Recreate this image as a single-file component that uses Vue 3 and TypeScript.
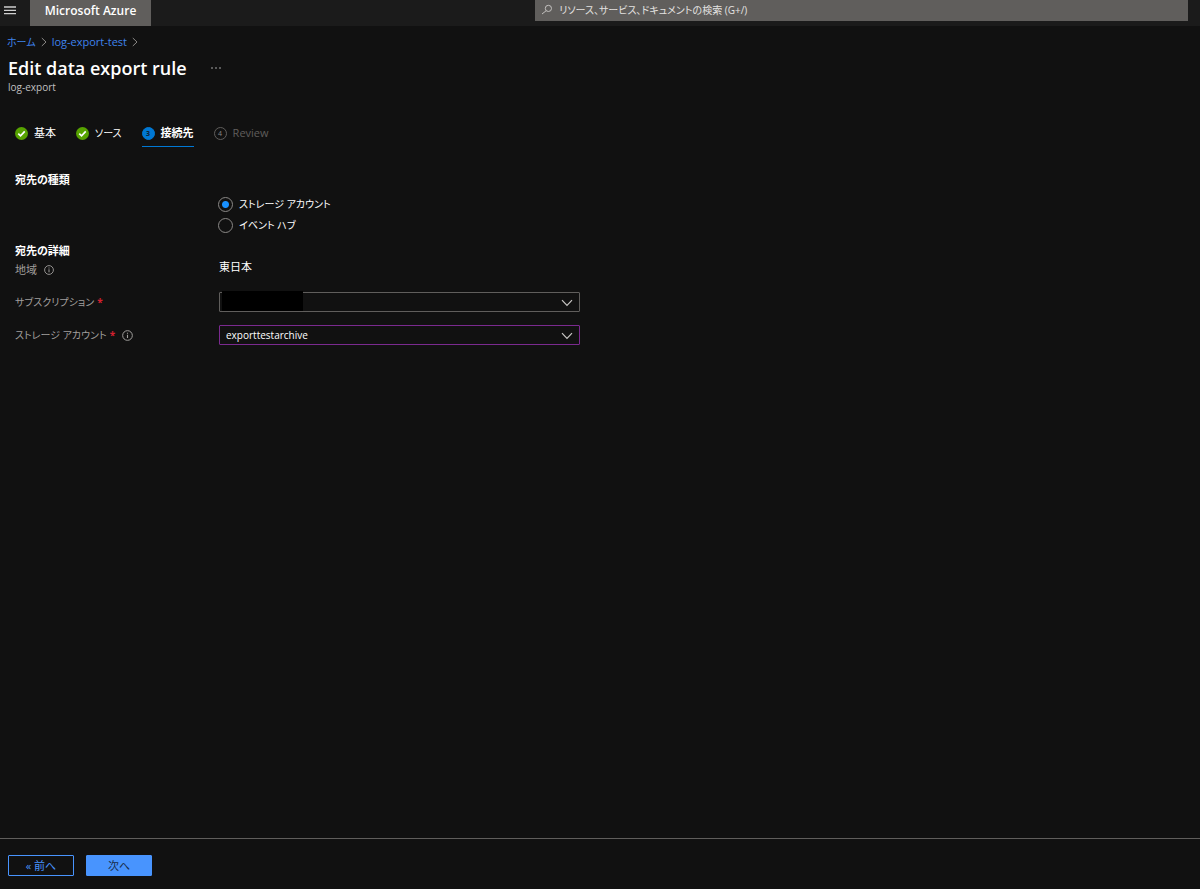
<script setup lang="ts">
import { ref } from 'vue'

const destination = ref('storage')
const subscription = ref('')
const account = ref('exporttestarchive')
const query = ref('')

const steps = [
  { label: '基本', state: 'done', number: 1, kana: false },
  { label: 'ソース', state: 'done', number: 2, kana: true },
  { label: '接続先', state: 'active', number: 3, kana: false },
  { label: 'Review', state: 'pending', number: 4, kana: false },
]
</script>

<template>
  <div class="portal">
    <header class="topbar">
      <button class="menu" aria-label="メニュー">
        <svg width="12" height="9" viewBox="0 0 12 9"><path d="M0 1h12M0 4.3h12M0 7.6h12" stroke="#d0d0d0" stroke-width="1.3" /></svg>
      </button>
      <a class="brand" href="#">Microsoft Azure</a>
      <label class="search">
        <svg width="12" height="12" viewBox="0 0 12 12" fill="none" stroke="#c4c2c0"><circle cx="7.4" cy="4.4" r="3.1" /><path d="M5.2 6.7L1 10" /></svg>
        <input v-model="query" type="text" aria-label="検索" placeholder="リソース、サービス、ドキュメントの検索 (G+/)" />
      </label>
    </header>

    <nav class="crumbs" aria-label="階層">
      <a class="kana" href="#">ホーム</a>
      <svg width="6" height="10" viewBox="0 0 6 10"><path d="M.8 1L5 5L.8 9" fill="none" stroke="#8a8886" /></svg>
      <a href="#">log-export-test</a>
      <svg width="6" height="10" viewBox="0 0 6 10"><path d="M.8 1L5 5L.8 9" fill="none" stroke="#8a8886" /></svg>
    </nav>

    <div class="heading">
      <h1>Edit data export rule</h1>
      <button class="more" aria-label="その他">
        <svg width="10" height="2" viewBox="0 0 10 2" fill="#b8b8b8"><circle cx="1" cy="1" r=".8" /><circle cx="5" cy="1" r=".8" /><circle cx="9" cy="1" r=".8" /></svg>
      </button>
    </div>
    <p class="subtitle">log-export</p>

    <main>
      <div class="steps" role="tablist">
        <button v-for="s in steps" :key="s.number" class="step" :class="s.state" role="tab" :aria-selected="s.state === 'active'">
          <svg v-if="s.state === 'done'" width="13" height="13" viewBox="0 0 14 14"><circle cx="7" cy="7" r="7" fill="#57a300" /><path d="M3.5 7.1L6 9.5L10.5 4.7" fill="none" stroke="#fff" stroke-width="1.8" /></svg>
          <span v-else class="number">{{ s.number }}</span>
          <span :class="{ kana: s.kana }">{{ s.label }}</span>
        </button>
      </div>

      <h2>宛先の種類</h2>
      <div class="radios" role="radiogroup" aria-label="宛先の種類">
        <label class="kana"><input v-model="destination" type="radio" name="destination" value="storage" />ストレージ アカウント</label>
        <label class="kana"><input v-model="destination" type="radio" name="destination" value="hub" />イベント ハブ</label>
      </div>

      <h2>宛先の詳細</h2>
      <div class="row region">
        <span class="name">地域
          <svg class="info" width="10" height="10" viewBox="0 0 10 10" fill="none" stroke="#a19f9d"><circle cx="5" cy="5" r="4.4" stroke-width=".9" /><path d="M5 4.3v3M5 2.5v1" /></svg>
        </span>
        <span>東日本</span>
      </div>
      <div class="row">
        <label class="name kana" for="subscription">サブスクリプション<b>*</b></label>
        <div class="picker">
          <select id="subscription" v-model="subscription"><option value=""></option></select>
          <span class="mask"></span>
          <svg class="chevron" width="12" height="8" viewBox="0 0 12 8"><path d="M1 1.2L6 6.4L11 1.2" fill="none" stroke="#c8c6c4" stroke-width="1.2" /></svg>
        </div>
      </div>
      <div class="row">
        <label class="name kana" for="account">ストレージ アカウント<b>*</b>
          <svg class="info" width="11" height="11" viewBox="0 0 10 10" fill="none" stroke="#a19f9d"><circle cx="5" cy="5" r="4.4" stroke-width=".9" /><path d="M5 4.3v3M5 2.5v1" /></svg>
        </label>
        <div class="picker">
          <select id="account" v-model="account" class="edited"><option value="exporttestarchive">exporttestarchive</option></select>
          <svg class="chevron" width="12" height="8" viewBox="0 0 12 8"><path d="M1 1.2L6 6.4L11 1.2" fill="none" stroke="#c8c6c4" stroke-width="1.2" /></svg>
        </div>
      </div>
    </main>

    <footer>
      <button class="previous">« 前へ</button>
      <button class="next">次へ</button>
    </footer>
  </div>
</template>

<style>
body {
  margin: 0;
  background: #111;
}
</style>

<style scoped>
.portal,
.portal * {
  box-sizing: border-box;
}
.portal {
  display: flex;
  flex-direction: column;
  min-height: 100vh;
  background: #111;
  color: #fff;
  font-family: "Open Sans", "Noto Sans CJK JP", sans-serif;
  font-feature-settings: "palt";
  font-size: 11px;
  line-height: 16px;
}
button,
input,
select {
  margin: 0;
  padding: 0;
  border: 0;
  border-radius: 0;
  background: none;
  color: inherit;
  font: inherit;
  font-feature-settings: inherit;
}
svg {
  display: block;
  flex: none;
}
a {
  color: #4894fe;
  text-decoration: none;
}
h1,
h2,
p {
  margin: 0;
}
.kana {
  font-size: 10px;
}
.topbar {
  display: flex;
  height: 26px;
  background: #1b1b1b;
}
.menu {
  width: 30px;
  padding: 0 0 5px 4px;
}
.brand {
  width: 121px;
  background: #605e5c;
  color: #fff;
  font-size: 12px;
  font-weight: 600;
  line-height: 22px;
  text-align: center;
}
.search {
  display: flex;
  align-items: center;
  gap: 6px;
  width: 54.4%;
  height: 21px;
  margin: 0 12px 0 auto;
  padding: 0 6px 1px;
  background: #605e5c;
}
.search input {
  flex: 1;
  min-width: 0;
  outline: 0;
  font-size: 10px;
}
.search input::placeholder {
  color: #e4e2e0;
  opacity: 1;
}
.crumbs {
  display: flex;
  align-items: center;
  gap: 5px;
  height: 32px;
  padding: 0 7px;
}
.crumbs a {
  color: #3f83ec;
}
.heading {
  display: flex;
  align-items: center;
  gap: 24px;
  height: 20px;
  padding-left: 8px;
}
h1 {
  font-size: 18px;
  font-weight: 600;
  line-height: 20px;
}
.subtitle {
  padding: 1px 8px 0;
  color: #c0c0c0;
  font-size: 10px;
}
main {
  flex: 1;
  padding: 28px 15px 0;
}
.steps {
  display: flex;
  gap: 20px;
  height: 24px;
  margin-bottom: 25px;
}
.step {
  display: flex;
  align-items: center;
  gap: 6px;
  padding-bottom: 3px;
  border-bottom: 1px solid transparent;
}
.step.active {
  border-color: #0078d4;
  font-weight: 700;
}
.number {
  width: 13px;
  height: 13px;
  border: 1px solid #0078d4;
  border-radius: 50%;
  background: #0078d4;
  color: #123;
  font-size: 7px;
  line-height: 11px;
  text-align: center;
}
.pending {
  color: #605e5c;
}
.pending .number {
  border-color: #605e5c;
  background: none;
  color: #8a8886;
}
h2 {
  font-size: 11px;
  font-weight: 700;
  line-height: 16px;
}
.radios {
  display: grid;
  gap: 5px;
  margin: 8px 0 10px 203px;
}
.radios label {
  display: flex;
  align-items: center;
  gap: 6px;
  width: max-content;
}
.radios input {
  appearance: none;
  width: 15px;
  height: 15px;
  border: 1px solid #8a8886;
  border-radius: 50%;
}
.radios input:checked {
  background: radial-gradient(circle, #1890ff 3px, transparent 4px);
}
.row {
  display: grid;
  grid-template-columns: 204px minmax(0, 361px);
  align-items: center;
  margin-bottom: 13px;
}
.row.region {
  height: 20px;
  align-items: start;
}
.name {
  display: flex;
  align-items: center;
  color: #a19f9d;
}
.region .name {
  padding-top: 3px;
}
.name b {
  margin-left: 3px;
  color: #d1202f;
}
.info {
  margin-left: 7px;
}
.picker {
  position: relative;
}
.picker select {
  appearance: none;
  display: block;
  width: 100%;
  height: 20px;
  padding: 0 28px 0 6px;
  border: 1px solid #605e5c;
  border-radius: 1px;
  font-size: 10px;
}
.picker select.edited {
  border-color: #7b2a8f;
}
.mask {
  position: absolute;
  top: -1px;
  left: 3px;
  width: 81px;
  height: 20px;
  background: #000;
  pointer-events: none;
}
.chevron {
  position: absolute;
  top: 7px;
  right: 7px;
  pointer-events: none;
}
footer {
  display: flex;
  gap: 12px;
  height: 51px;
  padding: 16px 8px 0;
  border-top: 1px solid #605e5c;
}
footer button {
  width: 66px;
  height: 21px;
  border: 1px solid #4894fe;
  border-radius: 1px;
  line-height: 16px;
}
.previous {
  color: #4894fe;
}
.next {
  background: #4894fe;
  color: #182c4a;
}
</style>
